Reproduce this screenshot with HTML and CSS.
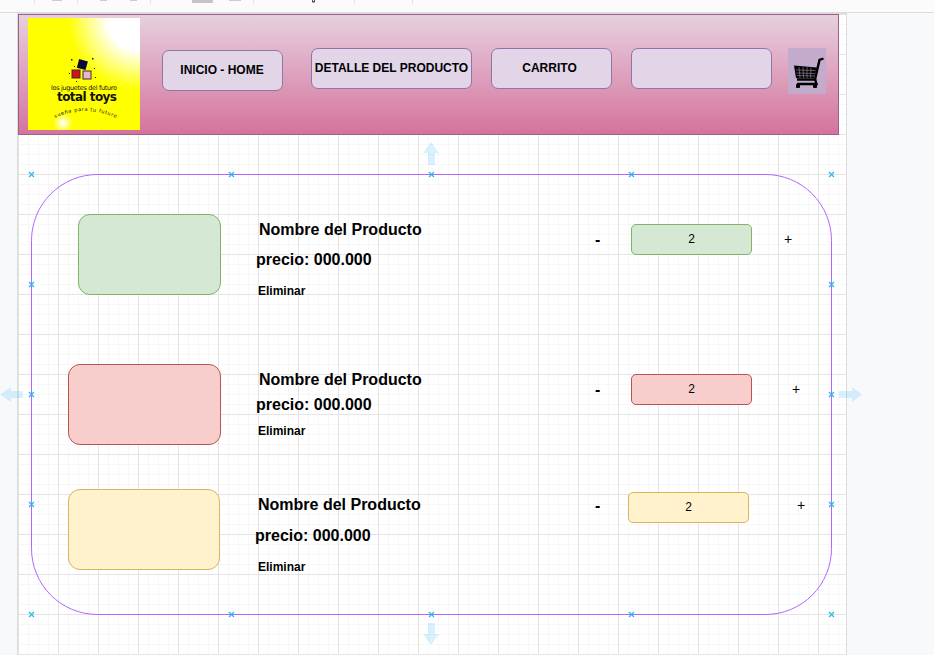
FILE: index.html
```html
<!DOCTYPE html>
<html lang="es">
<head>
  <meta charset="UTF-8" />
  <meta name="viewport" content="width=device-width, initial-scale=1.0"/>
  <title>total toys - carrito</title>
  <link rel="stylesheet" href="styles.css">
</head>
<body>
  <div class="app">
    <!-- barra de herramientas, cortada por arriba -->
    <svg class="toolbar" width="934" height="13" viewBox="0 0 934 12">
      <g fill="#e4e4e4">
        <rect x="34" y="0" width="1" height="4"/>
        <rect x="77" y="0" width="1" height="4"/>
        <rect x="150" y="0" width="1" height="4"/>
        <rect x="253" y="0" width="1" height="4"/>
        <rect x="354" y="0" width="1" height="4"/>
        <rect x="412" y="0" width="1" height="4"/>
      </g>
      <g fill="#cccccc">
        <rect x="52" y="0" width="10" height="1"/>
        <rect x="100" y="0" width="7" height="1"/>
        <rect x="130" y="0" width="7" height="1"/>
        <rect x="192" y="0" width="21" height="3" fill="#c4c4c4"/>
        <rect x="229" y="0" width="12" height="1"/>
      </g>
      <rect x="312.500" y="-1" width="2" height="3" fill="none" stroke="#555"/>
    </svg>

    <div class="workspace">
      <div class="canvas">
        <div class="header">
          <svg class="logo" width="112" height="112" viewBox="0 0 112 112">
            <defs>
              <radialGradient id="sol" cx="112" cy="0" r="72" gradientUnits="userSpaceOnUse">
                <stop offset="0" stop-color="#ffffff"/>
                <stop offset="0.45" stop-color="#ffffff"/>
                <stop offset="1" stop-color="#ffffff" stop-opacity="0"/>
              </radialGradient>
              <radialGradient id="brillo">
                <stop offset="0" stop-color="#ffffff"/>
                <stop offset="1" stop-color="#ffffff" stop-opacity="0"/>
              </radialGradient>
              <path id="curva" d="M27 100 Q57 86 88 100"/>
            </defs>
            <rect width="112" height="112" fill="#ffff00"/>
            <rect width="112" height="112" fill="url(#sol)"/>
            <circle cx="91" cy="25" r="6" fill="url(#brillo)"/>
            <circle cx="35" cy="105" r="10" fill="url(#brillo)"/>
            <rect x="50" y="42" width="9" height="9" fill="#0b0b3a" transform="rotate(15 54 46)"/>
            <rect x="44" y="52" width="8" height="8" fill="#d8101a" stroke="#333"/>
            <rect x="55" y="53" width="8" height="8" fill="#f0b0d8" stroke="#333"/>
            <g fill="#222">
              <rect x="43" y="41" width="1.500" height="1.500"/>
              <rect x="64" y="40" width="1.500" height="1.500"/>
              <rect x="46" y="48" width="1" height="1"/>
              <rect x="66" y="50" width="1" height="1"/>
              <rect x="41" y="55" width="1" height="1"/>
              <rect x="67" y="59" width="1" height="1"/>
              <rect x="48" y="63" width="1" height="1"/>
            </g>
            <text class="logo-lema" x="23" y="71.500" textLength="66" lengthAdjust="spacing">los juguetes del futuro</text>
            <text class="logo-marca" x="29" y="83" textLength="60" lengthAdjust="spacing">total toys</text>
            <text class="logo-sub"><textPath href="#curva" startOffset="0">sueña para tu futuro</textPath></text>
          </svg>

          <div class="nav-btn nav-home">INICIO - HOME</div>
          <div class="nav-btn nav-detalle">DETALLE DEL PRODUCTO</div>
          <div class="nav-btn nav-carrito">CARRITO</div>
          <div class="nav-btn nav-vacio"></div>

          <svg class="cart" width="38" height="46" viewBox="0 0 38 46">
            <rect width="38" height="46" fill="#c3abce"/>
            <path d="M35.500 10.500 L31.500 12 L27 31.500 L9 31.500" fill="none" stroke="#000" stroke-width="2.400"/>
            <path d="M6 17.500 L29 19.500 L26 30 L8 30 Z" fill="#000"/>
            <path d="M8 22 L27.500 22.500 M8.500 25 L27 25.500 M9 27.500 L26.500 28" stroke="#8f7d96" stroke-width="0.700"/>
            <path d="M11 19 L12 30 M15 19 L15.500 30 M19 19 L19 30 M23 19.500 L22.500 30" stroke="#8f7d96" stroke-width="0.700"/>
            <path d="M27 31 L28.500 36 L9 36" fill="none" stroke="#000" stroke-width="2.400"/>
            <rect x="8" y="36" width="4" height="4" rx="1" fill="#000"/>
            <rect x="25" y="36" width="4" height="4" rx="1" fill="#000"/>
          </svg>
        </div>

        <!-- producto 1 -->
        <div class="card card-verde card-1"></div>
        <div class="label nombre nombre-1">Nombre del Producto</div>
        <div class="label precio precio-1">precio: 000.000</div>
        <div class="label eliminar eliminar-1">Eliminar</div>
        <div class="label menos menos-1">-</div>
        <div class="cantidad card-verde cantidad-1">2</div>
        <div class="label mas mas-1">+</div>

        <!-- producto 2 -->
        <div class="card card-rojo card-2"></div>
        <div class="label nombre nombre-2">Nombre del Producto</div>
        <div class="label precio precio-2">precio: 000.000</div>
        <div class="label eliminar eliminar-2">Eliminar</div>
        <div class="label menos menos-2">-</div>
        <div class="cantidad card-rojo cantidad-2">2</div>
        <div class="label mas mas-2">+</div>

        <!-- producto 3 -->
        <div class="card card-amarillo card-3"></div>
        <div class="label nombre nombre-3">Nombre del Producto</div>
        <div class="label precio precio-3">precio: 000.000</div>
        <div class="label eliminar eliminar-3">Eliminar</div>
        <div class="label menos menos-3">-</div>
        <div class="cantidad card-amarillo cantidad-3">2</div>
        <div class="label mas mas-3">+</div>
      </div>
    </div>

    <!-- seleccion del marco: se sale del lienzo por los lados -->
    <svg class="seleccion" width="934" height="655" viewBox="0 0 934 655">
      <defs>
        <path id="marca" d="M-2.500 -2.500 L2.500 2.500 M-2.500 2.500 L2.500 -2.500" stroke="#29b6f2" stroke-width="1.200" fill="none"/>
      </defs>
      <rect x="31.500" y="174.500" width="800" height="440" rx="66" ry="66" fill="none" stroke="#b266ff"/>
      <g fill="#29b6f2" fill-opacity="0.18">
        <path d="M431 142 L439 153 L435 153 L435 165 L428 165 L428 153 L423 153 Z"/>
        <path d="M431 645 L439 634 L435 634 L435 623 L428 623 L428 634 L423 634 Z"/>
        <path d="M0 394.500 L11 387 L11 391 L23 391 L23 398 L11 398 L11 402 Z"/>
        <path d="M862 394.500 L852 387 L852 391 L839 391 L839 398 L852 398 L852 402 Z"/>
      </g>
      <use href="#marca" x="31.500" y="174.500"/>
      <use href="#marca" x="231.500" y="174.500"/>
      <use href="#marca" x="431.500" y="174.500"/>
      <use href="#marca" x="631.500" y="174.500"/>
      <use href="#marca" x="831.500" y="174.500"/>
      <use href="#marca" x="31.500" y="284.500"/>
      <use href="#marca" x="831.500" y="284.500"/>
      <use href="#marca" x="31.500" y="394.500"/>
      <use href="#marca" x="831.500" y="394.500"/>
      <use href="#marca" x="31.500" y="504.500"/>
      <use href="#marca" x="831.500" y="504.500"/>
      <use href="#marca" x="31.500" y="614.500"/>
      <use href="#marca" x="231.500" y="614.500"/>
      <use href="#marca" x="431.500" y="614.500"/>
      <use href="#marca" x="631.500" y="614.500"/>
      <use href="#marca" x="831.500" y="614.500"/>
    </svg>
  </div>
</body>
</html>
```

FILE: styles.css
```css
* {
  box-sizing: border-box;
}

body {
  margin: 0;
  font-family: "Liberation Sans", Arial, sans-serif;
  background-color: #f8f9fb;
  color: #000;
}

.app {
  position: relative;
  display: flex;
  flex-direction: column;
  width: 934px;
  height: 655px;
  overflow: hidden;
}

.toolbar {
  display: block;
  flex: none;
  background-color: #fbfbfb;
  border-bottom: 1px solid #dadce0;
}

.workspace {
  flex: 1;
  display: flex;
  padding-left: 17px;
  min-height: 0;
}

/* hoja con la cuadricula de draw.io */
.canvas {
  position: relative;
  width: 830px;
  height: 100%;
  border-top: 1px solid #dcdcdc;
  border-left: 1px solid #dcdcdc;
  border-right: 1px solid #dcdcdc;
  background-color: #fff;
  background-image:
    linear-gradient(to right, #e4e4e4 1px, transparent 1px),
    linear-gradient(to bottom, #e4e4e4 1px, transparent 1px),
    linear-gradient(to right, #f7f7f7 1px, transparent 1px),
    linear-gradient(to bottom, #f7f7f7 1px, transparent 1px);
  background-size: 40px 40px, 40px 40px, 10px 10px, 10px 10px;
}

.header {
  display: flex;
  align-items: flex-start;
  width: 821px;
  height: 121px;
  padding: 3px 0 0 9px;
  border: 1px solid #996185;
  background: linear-gradient(to bottom, #e6d0de, #d5739d);
}

.logo {
  flex: none;
  display: block;
}

.logo text {
  font-family: "DejaVu Sans", sans-serif;
  fill: #111;
}

.logo-lema {
  font-size: 6.500px;
}

.logo-marca {
  font-size: 12px;
  font-weight: bold;
}

.logo-sub {
  font-size: 5px;
  letter-spacing: 0.6px;
}

.nav-btn {
  flex: none;
  display: flex;
  align-items: center;
  justify-content: center;
  height: 41px;
  margin-top: 30px;
  padding-bottom: 2px;
  font-size: 12px;
  font-weight: bold;
  white-space: nowrap;
  background-color: #e1d5e7;
  border: 1px solid #9673a6;
  border-radius: 7px;
}

.nav-home {
  width: 121px;
  margin-top: 32px;
  margin-left: 22px;
  padding-right: 1px;
}

.nav-detalle {
  width: 161px;
  margin-left: 28px;
}

.nav-carrito {
  width: 121px;
  margin-left: 19px;
  padding-right: 4px;
}

.nav-vacio {
  width: 141px;
  margin-left: 19px;
}

.cart {
  flex: none;
  display: block;
  margin-top: 30px;
  margin-left: 16px;
}

/* nodos del diagrama, colocados sobre el lienzo */
.card,
.cantidad,
.label {
  position: absolute;
}

.card {
  height: 81px;
  border-radius: 12px;
  border-width: 1px;
  border-style: solid;
}

.card-verde {
  background-color: #d5e8d4;
  border-color: #82b366;
}

.card-rojo {
  background-color: #f8cecc;
  border-color: #b85450;
}

.card-amarillo {
  background-color: #fff2cc;
  border-color: #d6b656;
}

.card-1 { left: 60px; top: 200px; width: 143px; }
.card-2 { left: 50px; top: 350px; width: 153px; }
.card-3 { left: 50px; top: 475px; width: 152px; }

.label {
  line-height: 20px;
  white-space: nowrap;
}

.nombre {
  font-size: 16px;
  font-weight: bold;
}

.precio {
  font-size: 16px;
  font-weight: bold;
}

.eliminar {
  font-size: 12px;
  font-weight: bold;
}

.menos {
  font-size: 16px;
  font-weight: bold;
}

.mas {
  font-size: 14px;
}

.nombre-1 { left: 241px; top: 206px; }
.nombre-2 { left: 241px; top: 356px; }
.nombre-3 { left: 240px; top: 481px; }

.precio-1 { left: 238px; top: 236px; }
.precio-2 { left: 238px; top: 381px; }
.precio-3 { left: 237px; top: 512px; }

.eliminar-1 { left: 240px; top: 267px; }
.eliminar-2 { left: 240px; top: 407px; }
.eliminar-3 { left: 240px; top: 543px; }

.menos-1 { left: 577px; top: 216px; }
.menos-2 { left: 577px; top: 366px; }
.menos-3 { left: 577px; top: 482px; }

.mas-1 { left: 766px; top: 215px; }
.mas-2 { left: 774px; top: 365px; }
.mas-3 { left: 779px; top: 481px; }

.cantidad {
  display: flex;
  align-items: center;
  justify-content: center;
  width: 121px;
  height: 31px;
  padding-bottom: 2px;
  font-size: 12px;
  border-width: 1px;
  border-style: solid;
  border-radius: 5px;
}

.cantidad-1 { left: 613px; top: 210px; }
.cantidad-2 { left: 613px; top: 360px; }
.cantidad-3 { left: 610px; top: 478px; }

.seleccion {
  position: absolute;
  top: 0;
  left: 0;
  pointer-events: none;
}
```
